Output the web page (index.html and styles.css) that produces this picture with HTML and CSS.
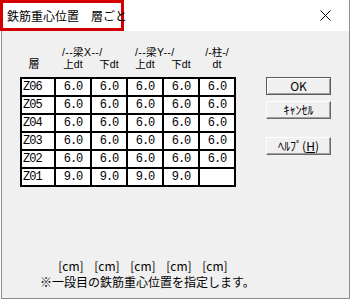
FILE: index.html
```html
<!DOCTYPE html>
<html lang="ja">
<head>
    <meta charset="UTF-8">
    <title>鉄筋重心位置 層ごと</title>
    <link rel="stylesheet" href="styles.css">
</head>
<body>
    <div class="dialog">
        <div class="titlebar">
            <div class="title">鉄筋重心位置　層ごと</div>
            <svg class="close" width="11" height="11" viewBox="0 0 11 11">
                <path d="M0.5 0.5 L10.5 10.5 M10.5 0.5 L0.5 10.5" stroke="#000" stroke-width="1" fill="none"/>
            </svg>
        </div>

        <div class="content">
            <div class="main">
                <!-- column headers -->
                <div class="cols head">
                    <span class="grp c2">/--梁X--/</span>
                    <span class="grp c4">/--梁Y--/</span>
                    <span class="col c6">/-柱-/</span>
                    <span class="sub floor">層</span>
                    <span class="sub">上dt</span>
                    <span class="sub">下dt</span>
                    <span class="sub">上dt</span>
                    <span class="sub">下dt</span>
                    <span class="sub">dt</span>
                </div>

                <div class="cols grid">
                    <div class="cell name">Z06</div><div class="cell">6.0</div><div class="cell">6.0</div><div class="cell">6.0</div><div class="cell">6.0</div><div class="cell">6.0</div>
                    <div class="cell name">Z05</div><div class="cell">6.0</div><div class="cell">6.0</div><div class="cell">6.0</div><div class="cell">6.0</div><div class="cell">6.0</div>
                    <div class="cell name">Z04</div><div class="cell">6.0</div><div class="cell">6.0</div><div class="cell">6.0</div><div class="cell">6.0</div><div class="cell">6.0</div>
                    <div class="cell name">Z03</div><div class="cell">6.0</div><div class="cell">6.0</div><div class="cell">6.0</div><div class="cell">6.0</div><div class="cell">6.0</div>
                    <div class="cell name">Z02</div><div class="cell">6.0</div><div class="cell">6.0</div><div class="cell">6.0</div><div class="cell">6.0</div><div class="cell">6.0</div>
                    <div class="cell name">Z01</div><div class="cell">9.0</div><div class="cell">9.0</div><div class="cell">9.0</div><div class="cell">9.0</div><div class="cell"></div>
                </div>

                <div class="cols units">
                    <span></span>
                    <span>[cm]</span>
                    <span>[cm]</span>
                    <span>[cm]</span>
                    <span>[cm]</span>
                    <span>[cm]</span>
                </div>

                <p class="note">※一段目の鉄筋重心位置を指定します。</p>
            </div>

            <div class="side">
                <button class="btn default">OK</button>
                <button class="btn">ｷｬﾝｾﾙ</button>
                <button class="btn help">ﾍﾙﾌﾟ(<u>H</u>)</button>
            </div>
        </div>
    </div>
</body>
</html>
```

FILE: styles.css
```css
body {
    margin: 0;
    background: #fff;
    font-family: "Noto Sans CJK JP", "DejaVu Sans", sans-serif;
    font-size: 12px;
    color: #000;
}

.dialog {
    margin-left: 1px;
    width: 349px;
    height: 299px;
    box-sizing: border-box;
    border: 1px solid #8c8c8c;
    border-top: 0;
    background: #f0f0f0;
}

.titlebar {
    height: 31px;
    background: #fff;
    display: flex;
    align-items: center;
    justify-content: space-between;
}

.title {
    margin-left: -2px;
    width: 124px;
    height: 31px;
    box-sizing: border-box;
    border: 3px solid #d40000;
    padding-left: 4px;
    line-height: 25px;
    font-size: 12px;
    white-space: nowrap;
}

.close {
    margin-right: 18px;
}

.content {
    display: flex;
}

.main {
    width: 264px;
    padding-left: 18px;
    box-sizing: border-box;
}

.cols {
    display: grid;
    grid-template-columns: 32px repeat(5, 34px);
    column-gap: 2px;
    padding: 0 2px;
    width: 216px;
    box-sizing: border-box;
}

/* latin primary font keeps the line boxes tight, kanji fall back to Noto */
.head {
    margin-top: 15px;
    grid-template-rows: 12px 12px;
    line-height: 12px;
    font-family: "Liberation Sans", "Noto Sans CJK JP", sans-serif;
    font-size: 10.5px;
}

.head .grp {
    grid-row: 1;
    padding-left: 6px;
    letter-spacing: 0.4px;
    white-space: nowrap;
}

.head .c2 { grid-column: 2 / span 2; }
.head .c4 { grid-column: 4 / span 2; padding-left: 7px; }

.head .col {
    grid-row: 1;
    grid-column: 6;
    text-align: center;
    white-space: nowrap;
}

.head .sub {
    grid-row: 2;
    text-align: center;
}

.head .floor {
    grid-column: 1;
    padding-right: 8px;
    font-size: 11px;
}

.grid {
    margin-top: 7px;
    padding: 2px;
    row-gap: 2px;
    grid-auto-rows: 16px;
    background: #000;
}

.cell {
    background: #fff;
    font-family: "Liberation Mono", monospace;
    font-size: 12px;
    letter-spacing: -1px;
    line-height: 16px;
    text-align: center;
}

.cell.name {
    text-align: left;
    padding-left: 1px;
}

.units {
    margin-top: 73px;
    line-height: 12px;
    font-size: 12px;
}

.units span {
    text-align: center;
    padding-right: 4px;
}

.note {
    margin: 4px 0 0 20px;
    line-height: 12px;
    white-space: nowrap;
}

.side {
    padding-top: 46px;
    display: flex;
    flex-direction: column;
    gap: 6px;
}

.btn {
    width: 65px;
    height: 18px;
    padding: 0;
    font-family: "Noto Sans CJK JP", sans-serif;
    font-size: 12px;
    line-height: 14px;
    background: #f0f0f0;
    border: 1px solid;
    border-color: #fff #696969 #696969 #fff;
    box-shadow: inset -1px -1px #a0a0a0;
    color: #000;
}

.btn.default {
    border-color: #5a5a5a;
    box-shadow: inset 1px 1px #fff, inset -1px -1px #a0a0a0;
}

.btn.help {
    margin-top: 12px;
}
```
